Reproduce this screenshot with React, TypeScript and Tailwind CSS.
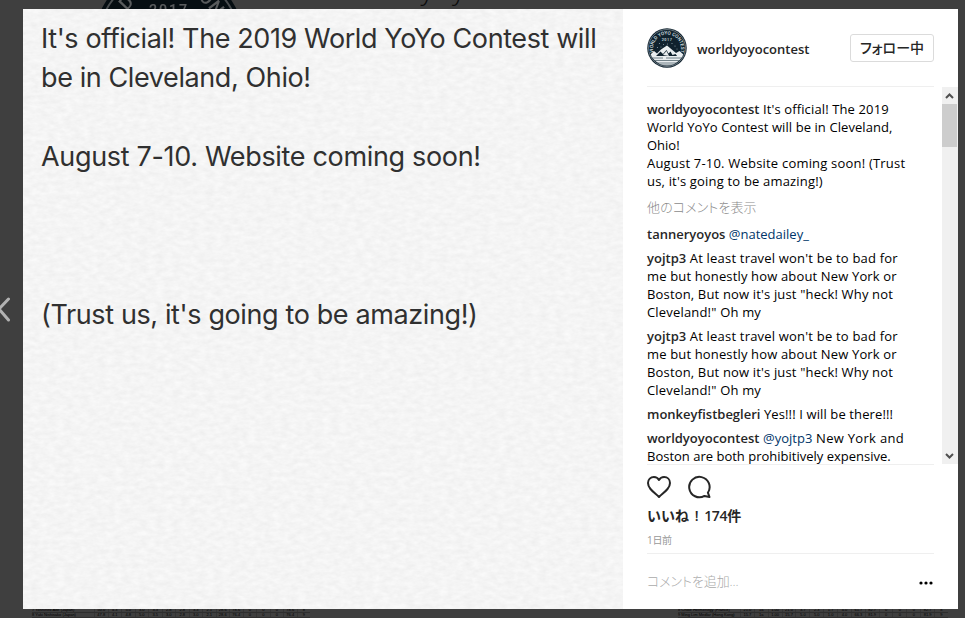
import { clsx } from "clsx";

type Part = { text: string; kind?: "user" | "mention" };
type Line = { parts: Part[]; tracking?: string };

const CAPTION: Line[] = [
    { parts: [{ text: "worldyoyocontest", kind: "user" }, { text: " It's official! The 2019" }], tracking: "tracking-[0.13px]" },
    { parts: [{ text: "World YoYo Contest will be in Cleveland," }], tracking: "tracking-[0.08px]" },
    { parts: [{ text: "Ohio!" }] },
    { parts: [{ text: "August 7-10. Website coming soon! (Trust" }], tracking: "tracking-[0.2px]" },
    { parts: [{ text: "us, it's going to be amazing!)" }], tracking: "tracking-[0.18px]" },
];

const TRAVEL: Line[] = [
    { parts: [{ text: "yojtp3", kind: "user" }, { text: " At least travel won't be to bad for" }], tracking: "tracking-[0.2px]" },
    { parts: [{ text: "me but honestly how about New York or" }], tracking: "tracking-[0.15px]" },
    { parts: [{ text: "Boston, But now it's just \"heck! Why not" }], tracking: "tracking-[0.16px]" },
    { parts: [{ text: "Cleveland!\" Oh my" }], tracking: "tracking-[0.18px]" },
];

const COMMENTS: Line[][] = [
    [{ parts: [{ text: "tanneryoyos", kind: "user" }, { text: " " }, { text: "@natedailey_", kind: "mention" }] }],
    TRAVEL,
    TRAVEL,
    [{ parts: [{ text: "monkeyfistbegleri", kind: "user" }, { text: " Yes!!! I will be there!!!" }], tracking: "tracking-[0.12px]" }],
    [
        { parts: [{ text: "worldyoyocontest", kind: "user" }, { text: " " }, { text: "@yojtp3", kind: "mention" }, { text: " New York and" }], tracking: "tracking-[0.3px]" },
        { parts: [{ text: "Boston are both prohibitively expensive." }] },
    ],
];

function Badge({ className, id }: { className: string; id: string }) {
    return (
        <svg viewBox="0 0 80 80" className={className}>
            <defs>
                <path id={`${id}-arc`} d="M13.5 50 A28 28 0 1 1 66.5 50" />
                <clipPath id={`${id}-clip`}>
                    <circle cx="40" cy="40" r="35" />
                </clipPath>
            </defs>
            <circle cx="40" cy="40" r="39.5" fill="#10222e" />
            <circle cx="40" cy="40" r="37" fill="none" stroke="#b9c3c8" strokeWidth="1" />
            <text fill="#dfe5e8" fontFamily="Roboto, sans-serif" fontSize="9.5" fontWeight="500">
                <textPath href={`#${id}-arc`} startOffset="50%" textAnchor="middle">WORLD YOYO CONTEST</textPath>
            </text>
            <text x="40" y="26" fill="#dfe5e8" fontFamily="Roboto, sans-serif" fontSize="7.5" fontWeight="500" textAnchor="middle" letterSpacing="1">2017</text>
            <g clipPath={`url(#${id}-clip)`}>
                <g fill="#8fa0aa">
                    <circle cx="25" cy="31" r="1.2" /><circle cx="33" cy="33" r="1" />
                    <circle cx="50" cy="31" r="1.2" /><circle cx="56" cy="36" r="1.2" />
                    <circle cx="21" cy="39" r="1.2" /><circle cx="60" cy="42" r="1" />
                    <circle cx="28" cy="38" r="1" /><circle cx="41" cy="32" r="1" />
                </g>
                <path d="M2 58 L14 46 L20 51 L28 43 L40 35 L52 45 L58 50 L65 46 L78 58 Z" fill="#e9edef" />
                <path d="M18 56 L27 47 L32 52 L39 44 L43 51 L47 47 L51 54 L57 52 L61 57 Z" fill="#10222e" />
                <path d="M32 54 L39 46 L44 56 Z" fill="#e9edef" />
                <rect y="56" width="80" height="24" fill="#e9edef" />
                <path d="M8 60 H32 M38 60 H70 M14 65 H66 M18 70 H60 M26 74 H54" stroke="#304550" strokeWidth="1.3" />
            </g>
        </svg>
    );
}

function Paper() {
    return (
        <svg className="absolute inset-0" width="600" height="600">
            <filter id="grain" x="0" y="0" width="100%" height="100%" colorInterpolationFilters="sRGB">
                <feTurbulence type="fractalNoise" baseFrequency="0.12 0.22" numOctaves="3" seed="8" result="noise" />
                <feColorMatrix
                    in="noise"
                    type="matrix"
                    values="0.06 0 0 0 0.928  0.06 0 0 0 0.928  0.06 0 0 0 0.928  0 0 0 0 1"
                />
            </filter>
            <rect width="600" height="600" filter="url(#grain)" />
        </svg>
    );
}

function TextLine({ line }: { line: Line }) {
    return (
        <span className={clsx("block whitespace-pre", line.tracking)}>
            {line.parts.map((part, i) => (
                <span
                    key={i}
                    className={clsx(
                        part.kind === "user" && "font-semibold tracking-normal text-[#262626]",
                        part.kind === "mention" && "tracking-normal text-[#003569]"
                    )}
                >
                    {part.text}
                </span>
            ))}
        </span>
    );
}

function ResultsTable({ rows, className }: { rows: string[][]; className: string }) {
    return (
        <div className={clsx("absolute font-['Liberation_Sans'] text-[4px] leading-[4px] text-black", className)}>
            {rows.map((row) => (
                <div key={row[0]} className="flex whitespace-nowrap border-b border-black/25">
                    {row.map((cell, i) => (
                        <span key={i} className={i === 0 ? "w-[62px] shrink-0" : "flex-1 border-l border-black/15 text-center"}>{cell}</span>
                    ))}
                </div>
            ))}
        </div>
    );
}

export default function App() {
    return (
        <div className="relative h-[618px] w-[965px] overflow-hidden bg-[#3f3f3f] pl-[23px] pt-[9px] font-['Open_Sans','Noto_Sans_CJK_JP',sans-serif]">
            {/* Page behind the dialog */}
            <div className="absolute left-[93px] -top-[34px] brightness-[0.4]">
                <Badge id="profile" className="h-[152px] w-[152px]" />
            </div>
            <span className="absolute left-[345px] -top-[34px] text-[30px] font-light leading-[44px] text-black/80">worldyoyocontest</span>
            <ResultsTable
                className="left-[32px] top-[608px] w-[278px]"
                rows={[
                    ["7 Yoshihiro Abe (Japan)", "50.0", "4.3", "5.0", "3.0", "3.3", "2.8", "2.8", "3.3", "2.1", "28.6", "78.6", "0", "0", "0", "78.6", "8"],
                    ["8 Yuki Nishisako (Japan)", "47.8", "4.1", "4.8", "5.0", "3.5", "3.0", "2.8", "3.0", "2.1", "28.6", "76.4", "0", "0", "0", "76.4", "9"],
                ]}
            />
            <ResultsTable
                className="left-[678px] top-[608px] w-[270px]"
                rows={[
                    ["8 Chloe Hermenegy (France)", "21.0", "1a", "1.00", "21.0", "3.7", "2.3", "1.7", "4.0", "61.7", "82.7", "0", "0", "0", "82.7", "8"],
                    ["9 Ming Lim Medlar (Hong Kong)", "15.7", "1a", "1.00", "15.7", "5.0", "5.0", "1.0", "4.0", "66.3", "81.9", "0", "0", "0", "81.9", "9"],
                ]}
            />

            <article className="relative flex h-[600px] w-[935px] bg-white">
                <div className="relative h-[600px] w-[600px] bg-[#f3f3f3]">
                    <Paper />
                    <div className="relative whitespace-pre pl-[18px] pt-[10px] font-[Inter,sans-serif] text-[27px] leading-[39.4px] tracking-[-0.4px] text-[#303030]">
                        <p>It's official! The 2019 World YoYo Contest will</p>
                        <p>be in Cleveland, Ohio!</p>
                        <p className="pt-[39.4px] tracking-[-0.33px]">August 7-10. Website coming soon!</p>
                        <p className="pt-[118px] tracking-[-0.38px]">(Trust us, it's going to be amazing!)</p>
                    </div>
                </div>

                <div className="flex w-[335px] flex-col text-[13px] leading-[18px] text-black">
                    <header className="mx-6 flex h-[78px] items-center border-b border-[#efefef]">
                        <Badge id="avatar" className="h-10 w-10" />
                        <span className="ml-[10px] pt-[2px] font-semibold text-[#262626]">worldyoyocontest</span>
                        <button className="ml-auto flex h-7 w-[84px] items-center justify-center rounded-[3px] border border-[#dbdbdb] text-[#262626]">
                            <span className="whitespace-nowrap text-[14px] font-medium [font-feature-settings:'palt']">フォロー中</span>
                        </button>
                    </header>

                    <div className="flex h-[377px] overflow-hidden">
                        <div className="flex-1 pl-6 pt-[13px]">
                            <div>{CAPTION.map((line, i) => <TextLine key={i} line={line} />)}</div>
                            <p className="mt-2 text-[13px] font-light tracking-[0.1px] text-[#8a8a8a] [font-feature-settings:'palt']">他のコメントを表示</p>
                            <div className="mt-[9px] flex flex-col gap-[6px]">
                                {COMMENTS.map((comment, i) => (
                                    <div key={i}>{comment.map((line, j) => <TextLine key={j} line={line} />)}</div>
                                ))}
                            </div>
                        </div>
                        <div className="flex w-4 flex-col items-center bg-[#f0f0f0]">
                            <svg width="16" height="17" viewBox="0 0 16 17" fill="none" stroke="#505050" strokeWidth="2">
                                <path d="M4 11 L7.5 7.5 L11 11" />
                            </svg>
                            <div className="h-[43px] w-[15px] self-start bg-[#cdcdcd]" />
                            <svg className="mt-auto" width="16" height="17" viewBox="0 0 16 17" fill="none" stroke="#505050" strokeWidth="2">
                                <path d="M4 7 L7.5 10.5 L11 7" />
                            </svg>
                        </div>
                    </div>

                    <footer className="mx-6 flex flex-1 flex-col border-t border-[#efefef]">
                        <div className="flex items-center gap-4 pt-[10px]">
                            <svg width="24" height="24" viewBox="0 0 24 24" fill="none" stroke="#262626" strokeWidth="2" strokeLinejoin="round">
                                <path d="M12 22 C9.8 19.5 6.2 17.3 3.5 14 C1.8 12 1 10.2 1 8 C1 4.4 3.7 2 6.9 2 C9.3 2 11 3.2 12 5 C13 3.2 14.7 2 17.1 2 C20.3 2 23 4.4 23 8 C23 10.2 22.2 12 20.5 14 C17.8 17.3 14.2 19.5 12 22 Z" />
                            </svg>
                            <svg width="24" height="24" viewBox="-0.5 0 24 24" fill="none" stroke="#262626" strokeWidth="2" strokeLinejoin="round">
                                <path d="M20.4 17.7 A10.2 10.2 0 1 0 17 20.9 L22 22 Z" />
                            </svg>
                        </div>
                        <p className="mt-2 text-[14px] font-semibold tracking-[-0.3px] text-[#262626]">
                            <span className="tracking-[0.2px] [font-feature-settings:'palt']">いいね</span>
                            <span className="inline-block w-[15px] text-center">!</span>
                            174件
                        </p>
                        <p className="mt-[6px] text-[10px] tracking-[-0.3px] text-[#999] [font-feature-settings:'palt']">1日前</p>
                        <div className="mt-1 flex flex-1 items-center justify-between border-t border-[#efefef] pb-[2px]">
                            <span className="font-light tracking-[-0.1px] text-[#aaa] [font-feature-settings:'palt']">コメントを追加...</span>
                            <svg className="mr-[1px] mt-[5px]" width="14" height="4" viewBox="0 0 14 4">
                                <circle cx="2" cy="2" r="1.6" /><circle cx="7" cy="2" r="1.6" /><circle cx="12" cy="2" r="1.6" />
                            </svg>
                        </div>
                    </footer>
                </div>
            </article>

            <svg className="absolute left-0 top-[295px]" width="12" height="28" viewBox="0 0 12 28" fill="none" stroke="#b2b2b2" strokeWidth="3" strokeLinecap="round">
                <path d="M8.5 4 L-1 14 L8.5 25" />
            </svg>
        </div>
    );
}
